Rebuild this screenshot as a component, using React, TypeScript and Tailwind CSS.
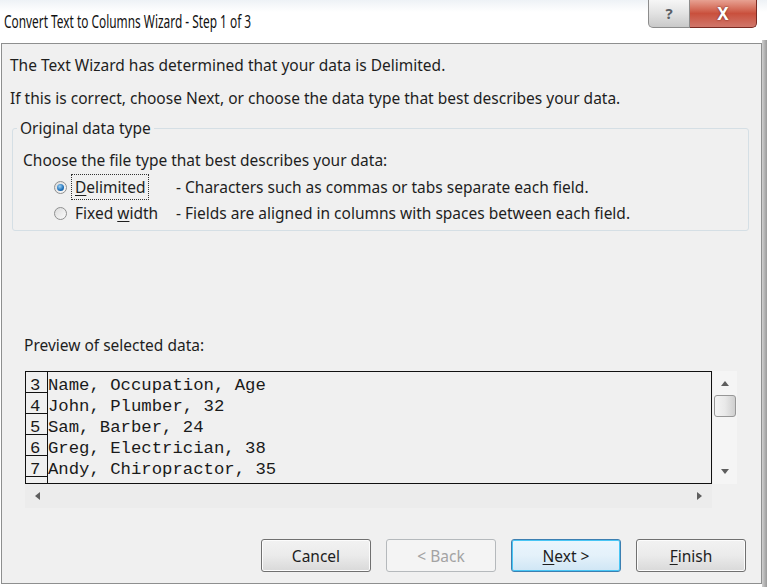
import React from 'react';

const rows = [
  { n: '3', text: 'Name, Occupation, Age' },
  { n: '4', text: 'John, Plumber, 32' },
  { n: '5', text: 'Sam, Barber, 24' },
  { n: '6', text: 'Greg, Electrician, 38' },
  { n: '7', text: 'Andy, Chiropractor, 35' },
  { n: '', text: '' },
];

const Radio = ({ checked }: { checked?: boolean }) => (
  <span className="flex h-[13px] w-[13px] items-center justify-center rounded-full border border-[#8e8f8f] bg-gradient-to-br from-[#dcdcdc] to-[#fbfbfb]">
    {checked && (
      <span className="h-[7px] w-[7px] rounded-full bg-[radial-gradient(circle_at_40%_35%,#9fd3f5,#1d6fb8_60%,#0d4a86)]" />
    )}
  </span>
);

const Button = ({
  children,
  kind = 'normal',
}: {
  children: React.ReactNode;
  kind?: 'normal' | 'disabled' | 'default';
}) => {
  const cls =
    kind === 'disabled'
      ? 'border-[#b5b9bc] bg-[#f4f4f4] text-[#a3a3a3]'
      : kind === 'default'
        ? 'border-[#3c7fb1] bg-gradient-to-b from-[#eaf6fd] via-[#e4f1fa] to-[#cfe6f5] text-[#1e1e1e] shadow-[inset_0_0_0_1px_#48c6f5]'
        : 'border-[#707070] bg-gradient-to-b from-[#f2f2f2] via-[#ebebeb] to-[#d9d9d9] text-[#1e1e1e] shadow-[inset_0_0_0_1px_#fcfcfc]';
  return (
    <div className={`flex h-[33px] w-[110px] items-center justify-center rounded-[3px] border text-[15.5px] ${cls}`}>
      {children}
    </div>
  );
};

const Tri = ({ dir }: { dir: 'up' | 'down' | 'left' | 'right' }) => {
  const pts = {
    up: '0,5 4,0 8,5',
    down: '0,0 8,0 4,5',
    left: '5,0 5,8 0,4',
    right: '0,0 0,8 5,4',
  }[dir];
  const w = dir === 'up' || dir === 'down' ? 8 : 5;
  const h = dir === 'up' || dir === 'down' ? 5 : 8;
  return (
    <svg width={w} height={h} viewBox={`0 0 ${w} ${h}`}>
      <polygon points={pts} fill="#5e5e5e" />
    </svg>
  );
};

export default function App() {
  return (
    <div className="relative h-[587px] w-[767px] overflow-hidden bg-white font-['Noto_Sans',sans-serif] text-[#1e1e1e]">
      {/* title bar */}
      <div className="h-[43px] bg-[linear-gradient(180deg,#eef2f6_0px,#ffffff_12px,#ffffff_100%)] pl-[4px] pt-[10px]">
        <span className="inline-block origin-left scale-x-[0.66] whitespace-nowrap text-[18px] leading-[22px] text-[#111]">
          Convert Text to Columns Wizard - Step 1 of 3
        </span>
      </div>
      <div className="absolute right-[10px] top-0 flex h-[28px]">
        <div className="flex w-[42px] items-center justify-center rounded-bl-[5px] border border-t-0 border-[#8c8c8c] bg-gradient-to-b from-[#f6f6f6] via-[#e2e2e2] to-[#c9c9c9] text-[15px] font-bold text-[#5a5f66]">
          ?
        </div>
        <div className="flex w-[67px] items-center justify-center rounded-br-[5px] border border-l-0 border-t-0 border-[#7a2a22] bg-gradient-to-b from-[#e7a192] via-[#c9503d] to-[#d0766a] text-[17px] font-bold text-white [text-shadow:0_0_2px_#5b1d16]">
          X
        </div>
      </div>

      {/* client area */}
      <div className="ml-[1px] flex h-[541px] w-[761px] flex-col border border-[#8e8f8f] bg-[#f0f0f0] text-[15.5px] leading-[20px]">
        <div className="pl-2 pt-[11px]">The Text Wizard has determined that your data is Delimited.</div>
        <div className="mt-[13px] pl-2">If this is correct, choose Next, or choose the data type that best describes your data.</div>

        <fieldset className="ml-[10px] mt-[10px] w-[737px] rounded-[3px] border border-[#d5dfe5] pb-[4px]">
          <legend className="ml-[4px] px-[3px] leading-[20px]">Original data type</legend>
          <div className="mt-[12px] pl-[10px]">Choose the file type that best describes your data:</div>
          <div className="mt-[4px] flex h-[26px] items-center pl-[41px]">
            <Radio checked />
            <span className="ml-[4px] w-[105px]">
              <span className="border border-dotted border-[#333] px-[3px] py-[1px]">
                <span className="underline underline-offset-2">D</span>elimited
              </span>
            </span>
            <span>- Characters such as commas or tabs separate each field.</span>
          </div>
          <div className="flex h-[26px] items-center pl-[41px]">
            <Radio />
            <span className="ml-[4px] w-[105px] pl-[4px]">
              Fixed <span className="underline underline-offset-2">w</span>idth
            </span>
            <span>- Fields are aligned in columns with spaces between each field.</span>
          </div>
        </fieldset>

        <div className="mt-[104px] pl-[22px]">Preview of selected data:</div>

        <div className="ml-[23px] mt-[16px] flex w-[712px] flex-col">
          <div className="flex">
            <div className="h-[113px] w-[687px] overflow-hidden border border-[#111] font-['Liberation_Mono',monospace] text-[17.3px] text-[#1a1a1a]">
              {rows.map((r, i) => (
                <div key={i} className="flex h-[21px]">
                  <div className="h-[21px] w-[22px] border-b border-r border-[#111] pl-[4px] pt-[7px] leading-[13px]">{r.n}</div>
                  <div className="whitespace-pre pt-[7px] leading-[13px]">{r.text}</div>
                </div>
              ))}
            </div>
            <div className="ml-[1px] flex h-[113px] w-[24px] flex-col items-center bg-[#f5f5f5]">
              <div className="mt-[10px]">
                <Tri dir="up" />
              </div>
              <div className="mt-[9px] h-[22px] w-[22px] rounded-[3px] border border-[#979797] bg-gradient-to-r from-[#f4f4f4] via-[#e9e9e9] to-[#cfcfcf]" />
              <div className="mt-auto mb-[10px]">
                <Tri dir="down" />
              </div>
            </div>
          </div>
          <div className="flex h-[24px] w-[687px] items-center justify-between bg-[#ececec] px-[10px]">
            <Tri dir="left" />
            <Tri dir="right" />
          </div>
        </div>

        <div className="mt-auto flex justify-end gap-[15px] pb-[11px] pr-[15px]">
          <Button>Cancel</Button>
          <Button kind="disabled">&lt; Back</Button>
          <Button kind="default">
            <span>
              <span className="underline underline-offset-2">N</span>ext &gt;
            </span>
          </Button>
          <Button>
            <span>
              <span className="underline underline-offset-2">F</span>inish
            </span>
          </Button>
        </div>
      </div>

      {/* right edge shading */}
      <div className="absolute right-0 top-[40px] h-[547px] w-[5px] bg-gradient-to-r from-[#d0d0d0] to-[#9a9a9a]" />
    </div>
  );
}
